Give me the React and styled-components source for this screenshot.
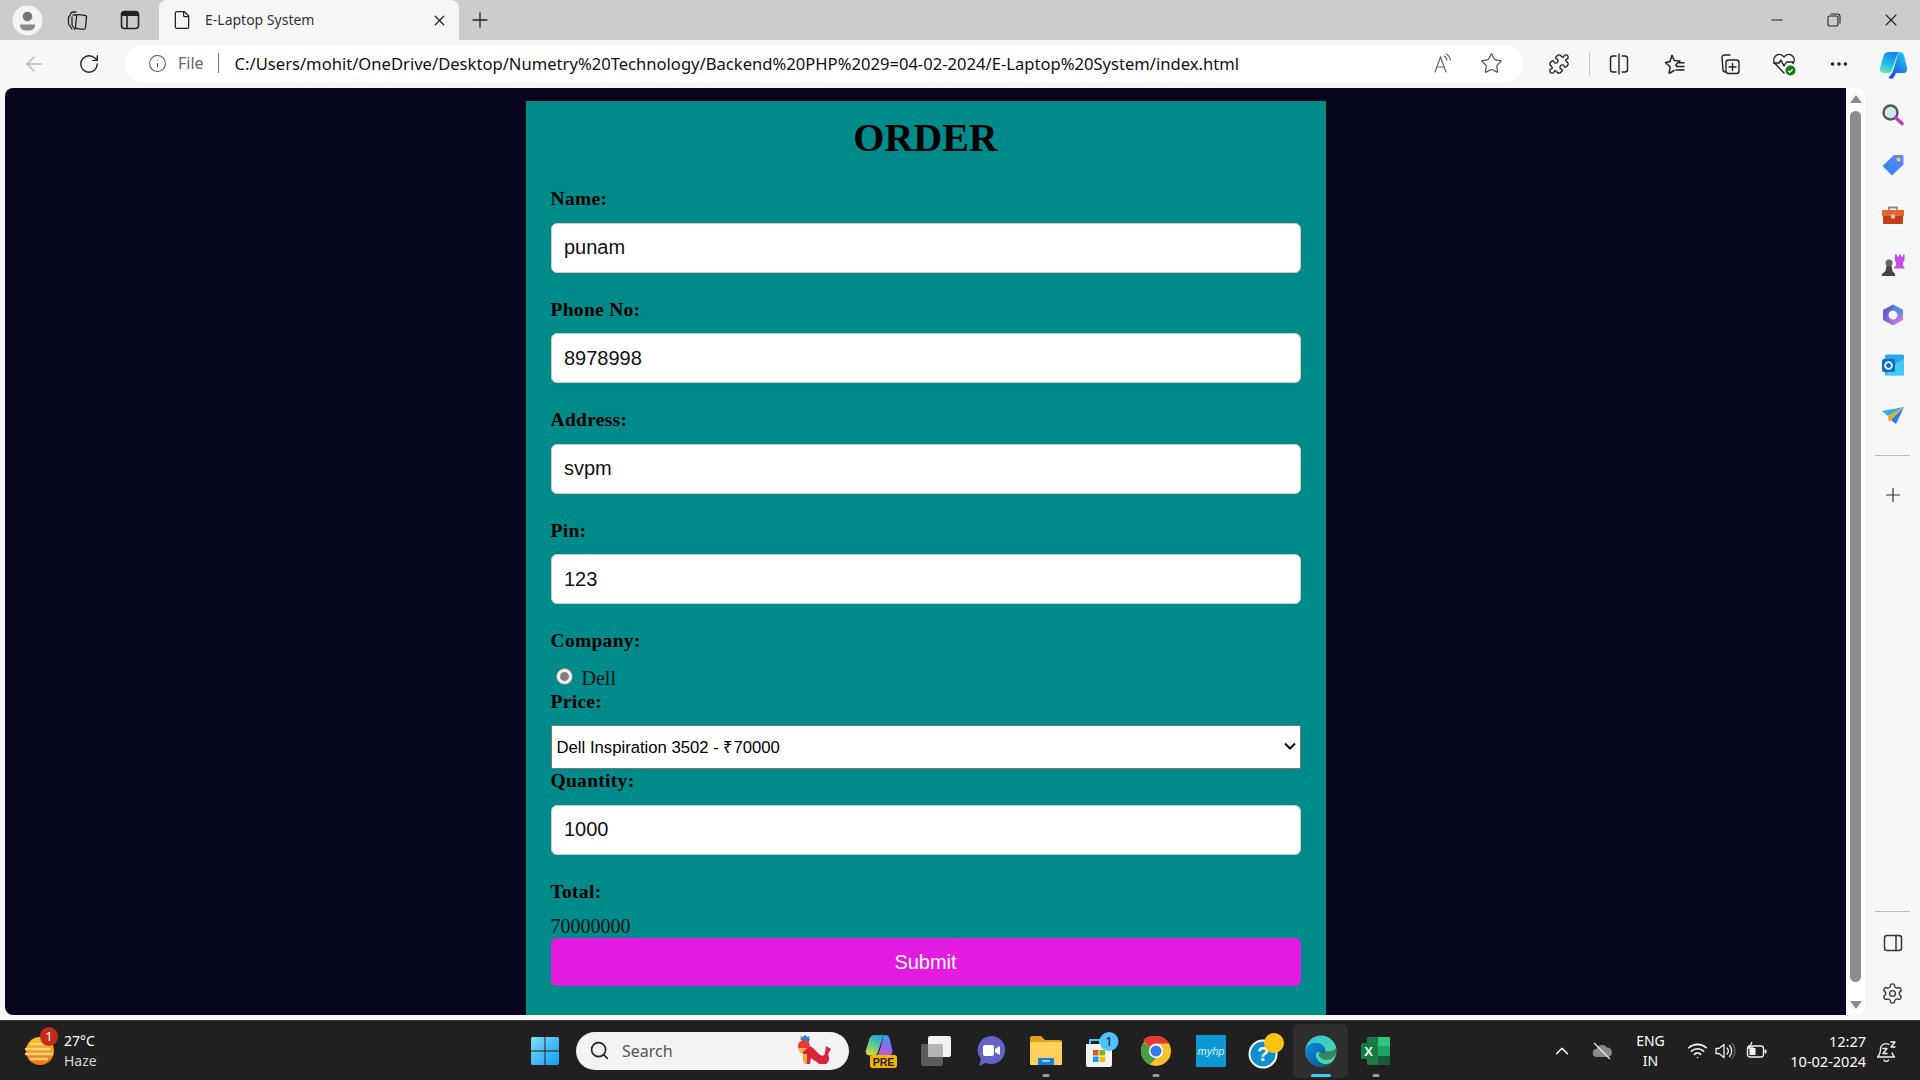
import React from 'react';
import styled, { createGlobalStyle } from 'styled-components';
import { ArrowLeft, RotateCw, Info, Star, Plus, X, Minus, File, Search, ChevronUp, Wifi, Settings, MoreHorizontal, Puzzle } from 'lucide-react';

const GlobalStyle = createGlobalStyle`
  * { box-sizing: border-box; }
  html, body { margin: 0; padding: 0; height: 100%; overflow: hidden; background: #f7f7f7; }
`;

const chromeFont = `"Noto Sans", "Open Sans", sans-serif`;
const pageFont = `"Liberation Serif", "Times New Roman", serif`;
const fieldFont = `"Liberation Sans", Arial, sans-serif`;

const URL_TEXT = 'C:/Users/mohit/OneDrive/Desktop/Numetry%20Technology/Backend%20PHP%2029=04-02-2024/E-Laptop%20System/index.html';

/* ---------- browser chrome ---------- */
const Screen = styled.div`
  width: 1920px;
  height: 1080px;
  display: flex;
  flex-direction: column;
  overflow: hidden;
`;

const TabStrip = styled.div`
  height: 40px;
  background: #cccccc;
  display: flex;
  align-items: stretch;
  flex: none;
`;

const Slot = styled.div`
  width: ${p => p.$w}px;
  flex: none;
  display: flex;
  align-items: center;
  justify-content: center;
  color: ${p => p.$color || '#222'};
  margin-left: ${p => p.$ml || 0}px;
`;

const Tab = styled.div`
  width: 300px;
  background: #f7f7f7;
  border-radius: 8px 8px 0 0;
  display: flex;
  align-items: center;
  padding-left: 13px;
  padding-right: 11px;
  color: #222;
`;

const TabTitle = styled.span`
  font: 400 14px ${chromeFont};
  color: #333;
  margin-left: 13px;
  margin-top: -2px;
  flex: 1;
`;

const WindowControls = styled.div`
  margin-left: auto;
  display: flex;
`;

const Toolbar = styled.div`
  height: 48px;
  background: #f7f7f7;
  display: flex;
  align-items: center;
  flex: none;
  overflow: hidden;
`;

const AddressBar = styled.div`
  width: 1398px;
  height: 37px;
  margin-left: 15px;
  margin-top: -2px;
  background: #fff;
  border-radius: 19px;
  display: flex;
  align-items: center;
  padding: 0 7px 0 23px;
  flex: none;
`;

const FileLabel = styled.span`
  font: 400 16px ${chromeFont};
  color: #666;
  margin-left: 11px;
`;

const BarDivider = styled.span`
  width: 1px;
  height: 20px;
  background: #777;
  margin: 0 16px 0 14px;
`;

const UrlText = styled.span`
  font: 400 16.6px ${chromeFont};
  color: #111;
  white-space: nowrap;
`;

const AddressActions = styled.div`
  margin-left: auto;
  display: flex;
`;

const ToolDivider = styled.span`
  width: 1px;
  height: 24px;
  background: #c8c8c8;
  margin: 0 1px 0 3px;
  flex: none;
`;

const Main = styled.div`
  flex: 1;
  display: flex;
  background: #f7f7f7;
  min-height: 0;
`;

const Viewport = styled.div`
  margin-left: 5px;
  width: 1860px;
  height: 927px;
  display: flex;
  border-radius: 8px;
  overflow: hidden;
  flex: none;
`;

const Page = styled.div`
  width: 1841px;
  background: #070820;
  display: flex;
  justify-content: center;
  align-items: flex-start;
  overflow: hidden;
`;

const Scrollbar = styled.div`
  width: 19px;
  background: #fff;
  display: flex;
  flex-direction: column;
  align-items: center;
  padding: 7px 0 6px;
`;

const ScrollArrow = styled.div`
  width: 0;
  height: 0;
  border-left: 6px solid transparent;
  border-right: 6px solid transparent;
  ${p => (p.$down ? 'border-top: 8px solid #8c8c8c;' : 'border-bottom: 8px solid #8c8c8c;')}
`;

const ScrollThumb = styled.div`
  width: 11px;
  flex: 1;
  margin: 8px 0 19px;
  background: #8c8c8c;
  border-radius: 6px;
`;

const Sidebar = styled.div`
  width: 55px;
  flex: none;
  height: 927px;
  display: flex;
  flex-direction: column;
  align-items: center;
  padding-top: 14px;
`;

const SideItem = styled.div`
  width: 26px;
  height: 26px;
  margin-bottom: ${p => (p.$last ? 9 : 24)}px;
  display: flex;
  align-items: center;
  justify-content: center;
  color: #333;
`;

const SideRule = styled.div`
  width: 35px;
  height: 1px;
  background: #bdbdbd;
  margin: ${p => p.$m};
`;

const Spacer = styled.div`
  flex: 1;
`;

/* ---------- order form ---------- */
const Panel = styled.form`
  width: 800px;
  margin-top: 13px;
  padding: 13px 25px 28px;
  background: #008b8b;
  box-shadow: 0 0 5px #000;
  min-height: 914px;
`;

const Title = styled.h1`
  margin: 0 0 25px;
  font: 700 40px/48px ${pageFont};
  color: #000;
  text-align: center;
`;

const Label = styled.label`
  display: block;
  margin-bottom: 12.5px;
  font: 700 19.5px/23px ${pageFont};
  letter-spacing: 0.3px;
  color: #000;
`;

const TextInput = styled.input`
  display: block;
  width: 750px;
  height: 50px;
  margin-bottom: 25px;
  padding: 0 12.5px;
  border: 1px solid #ccc;
  border-radius: 6px;
  background: #fff;
  font: 400 20px ${fieldFont};
  color: #111;
  outline: none;
`;

const RadioRow = styled.div`
  height: 25px;
  padding-top: 2px;
  display: flex;
  align-items: center;
  font: 400 20px/23px ${pageFont};
  color: #111;
`;

const Radio = styled.input`
  appearance: none;
  width: 15px;
  height: 15px;
  margin: 0 10px 3px 6px;
  border-radius: 50%;
  background: #808080;
  border: 3px solid #f2f2f2;
  box-shadow: 0 0 0 1px #8a8a8a;
`;

const SelectWrap = styled.div`
  position: relative;
  width: 750px;
  height: 44px;
`;

const PriceSelect = styled.select`
  appearance: none;
  width: 100%;
  height: 100%;
  padding: 0 5px;
  border: 1px solid #767676;
  border-radius: 0;
  background: #fff;
  font: 400 16.7px ${fieldFont};
  color: #000;
  outline: none;
`;

const SelectChevron = styled.svg`
  position: absolute;
  right: 5px;
  top: 17px;
  pointer-events: none;
`;

const TotalValue = styled.div`
  font: 400 20px/23px ${pageFont};
  color: #111;
`;

const SubmitButton = styled.button`
  display: block;
  width: 750px;
  height: 48px;
  border: none;
  border-radius: 6px;
  background: #e31adf;
  color: #fff;
  font: 400 20px ${fieldFont};
`;

/* ---------- taskbar ---------- */
const Taskbar = styled.div`
  height: 60px;
  flex: none;
  background: #202020;
  border-top: 1px solid #3a3a3a;
  display: flex;
  align-items: center;
  color: #fff;
  font-family: ${chromeFont};
`;

const Weather = styled.div`
  width: 530px;
  padding-left: 24px;
  display: flex;
  align-items: center;
  flex: none;
`;

const WeatherIcon = styled.div`
  position: relative;
  width: 32px;
  height: 34px;
  flex: none;
`;

const RedBadge = styled.span`
  position: absolute;
  top: -7px;
  right: -2px;
  width: 18px;
  height: 19px;
  border-radius: 50%;
  background: #c42b1c;
  font: 400 13px/19px ${chromeFont};
  text-align: center;
  color: #fff;
`;

const WeatherText = styled.div`
  margin-left: 8px;
  font-size: 14px;
  line-height: 20px;
  & > div:last-child { color: #d5d5d5; }
`;

const SearchPill = styled.div`
  width: 273px;
  height: 38px;
  margin-left: 16px;
  background: #f3f3f3;
  border-radius: 19px;
  display: flex;
  align-items: center;
  padding: 0 12px 0 13px;
  color: #222;
  flex: none;
`;

const SearchText = styled.span`
  margin-left: 12px;
  flex: 1;
  font-size: 16px;
  color: #555;
`;

const TaskSlot = styled.div`
  position: relative;
  width: 55px;
  height: 54px;
  flex: none;
  display: flex;
  align-items: center;
  justify-content: center;
  border-radius: 5px;
  background: ${p => (p.$active ? '#2e2e2e' : 'transparent')};
  &::after {
    content: '';
    display: ${p => (p.$running || p.$active ? 'block' : 'none')};
    position: absolute;
    bottom: 1px;
    left: 50%;
    transform: translateX(-50%);
    width: ${p => (p.$active ? 20 : 7)}px;
    height: 3px;
    border-radius: 2px;
    background: ${p => (p.$active ? '#4cc2ff' : '#9a9a9a')};
  }
`;

const TaskIcons = styled.div`
  display: flex;
  margin-left: 4px;
`;

const Tray = styled.div`
  margin-left: auto;
  padding-right: 12px;
  display: flex;
  align-items: center;
  height: 100%;
`;

const TraySlot = styled.div`
  width: ${p => p.$w}px;
  margin-left: ${p => p.$ml || 0}px;
  flex: none;
  display: flex;
  align-items: center;
  justify-content: center;
`;

const LangText = styled.div`
  width: 48px;
  text-align: center;
  font-size: 14px;
  line-height: 20px;
`;

const Clock = styled.div`
  width: 91px;
  text-align: right;
  font-size: 14.5px;
  line-height: 20px;
`;

const stroke = { fill: 'none', stroke: 'currentColor', strokeWidth: 1.5, strokeLinecap: 'round', strokeLinejoin: 'round' };

/* ---------- icons: toolbar ---------- */
const ProfileIcon = () => (
  <svg width="31" height="31" viewBox="0 0 31 31">
    <circle cx="15.5" cy="15.5" r="15" fill="#f4f4f4" />
    <circle cx="15.5" cy="11.5" r="4.8" fill="#777" />
    <path d="M8 19.5h15v2a6 6 0 0 1-6 4h-3a6 6 0 0 1-6-4z" fill="#8c8c8c" />
  </svg>
);
const WorkspacesIcon = () => (
  <svg width="24" height="24" viewBox="0 0 24 24" {...stroke} strokeWidth="1.3">
    <path d="M8 4h3M5.5 6.5A2.5 2.5 0 0 1 8 4" />
    <path d="M5 7.5 3.5 9v7l3.5 5" />
    <path d="M8 7h3.5M7 9v8l3 4.500" />
    <rect x="11" y="7" width="10" height="14" rx="2" transform="rotate(6 16 14)" />
  </svg>
);
const VerticalTabsIcon = () => (
  <svg width="22" height="22" viewBox="0 0 22 22">
    <rect x="2.500" y="2.500" width="17" height="17" rx="3" fill="none" stroke="#222" strokeWidth="1.6" />
    <path d="M3 7V5a2 2 0 0 1 2-2h12a2 2 0 0 1 2 2v2z" fill="#222" />
    <path d="M8 7v12" stroke="#222" strokeWidth="1.6" />
  </svg>
);
const RestoreIcon = () => (
  <svg width="16" height="16" viewBox="0 0 16 16" {...stroke} strokeWidth="1.1">
    <rect x="2" y="4" width="10" height="10" rx="1.500" />
    <path d="M5 2h6.500A2.500 2.500 0 0 1 14 4.500V11" />
  </svg>
);
const ReadAloudIcon = () => (
  <svg width="22" height="22" viewBox="0 0 22 22" fill="none" stroke="#666" strokeWidth="1.200" strokeLinecap="round">
    <path d="M3 20 8.500 5 14 20M5 15h7" />
    <path d="M12 4a6 6 0 0 1 3 4M14.500 2a9 9 0 0 1 4 6" />
  </svg>
);
const SplitIcon = () => (
  <svg width="22" height="24" viewBox="0 0 22 24" {...stroke} strokeWidth="1.400">
    <path d="M8 4H5a2.500 2.500 0 0 0-2.500 2.500v11A2.500 2.500 0 0 0 5 20h3M14 4h3a2.500 2.500 0 0 1 2.500 2.500v11A2.500 2.500 0 0 1 17 20h-3" />
    <path d="M11 2v20" />
  </svg>
);
const FavoritesIcon = () => (
  <svg width="24" height="24" viewBox="0 0 24 24" {...stroke} strokeWidth="1.500">
    <path d="M10 3.500 12.300 8.500 18 9l-4.300 3.800 1.300 1.200M7 21l1.200-6L3.500 10.500 8 9.500" />
    <path d="M10 3.500 8 9.500M8 21l4-2.500M14.500 14.500H22M14 18h8M17 10.800h5" />
  </svg>
);
const CollectionsIcon = () => (
  <svg width="24" height="24" viewBox="0 0 24 24" {...stroke} strokeWidth="1.400">
    <path d="M13 3H7.500A2.500 2.500 0 0 0 5 5.500l1 12a2.500 2.500 0 0 0 2.500 2.500" />
    <rect x="9" y="8" width="13" height="13.500" rx="2.500" />
    <path d="M15.500 11.500v7M12 15h7" />
  </svg>
);
const HealthIcon = () => (
  <svg width="26" height="26" viewBox="0 0 26 26">
    <path d="M13 22 4 12.500A5.500 5.500 0 0 1 12 5l1 1 1-1a5.500 5.500 0 0 1 8 7.500M2.500 12h5.500l2-3 3 6 2.500-4h6" fill="none" stroke="#222" strokeWidth="1.400" strokeLinejoin="round" strokeLinecap="round" />
    <circle cx="19.500" cy="19.500" r="5" fill="#107c10" />
    <path d="m17.300 19.600 1.600 1.600 2.800-3" fill="none" stroke="#fff" strokeWidth="1.300" />
  </svg>
);
const CopilotLeft = 'M11 3c-3 0-4.500 1.500-5.500 4L2 19c-.8 3 1 5 4 5h4c2 0 3.500-1 4-3l5-15c.5-2 1.500-3 3-3z';
const CopilotRight = 'M22 3c2 0 3.500 1 4 3l3 13c.5 3-1 5-4 5h-7l-2 4c-1 2-3 2-5 1-1-.5 0-1 1-2 2-2 3-5 4-8l3-11c.4-3 1-5 3-5z';
const CopilotIcon = () => (
  <svg width="30" height="30" viewBox="0 0 30 30">
    <defs>
      <linearGradient id="cop1" x1="0.6" y1="0" x2="0.2" y2="1">
        <stop offset="0" stopColor="#1b7ff0" />
        <stop offset="0.55" stopColor="#1ac0e8" />
        <stop offset="1" stopColor="#6fe8b0" />
      </linearGradient>
      <linearGradient id="cop2" x1="0.8" y1="0" x2="0.2" y2="1">
        <stop offset="0" stopColor="#28c8f0" />
        <stop offset="1" stopColor="#1348e0" />
      </linearGradient>
    </defs>
    <path d={CopilotLeft} fill="url(#cop1)" />
    <path d={CopilotRight} fill="url(#cop2)" />
  </svg>
);

/* ---------- icons: sidebar ---------- */
const SideSearch = () => (
  <svg width="24" height="24" viewBox="0 0 24 24">
    <circle cx="9.500" cy="9.500" r="7" fill="#cfe8f5" stroke="#555" strokeWidth="2.400" />
    <path d="m15 15 6 5.500" stroke="#c239d8" strokeWidth="3.600" strokeLinecap="round" />
  </svg>
);
const SideTag = () => (
  <svg width="24" height="24" viewBox="0 0 24 24">
    <defs><linearGradient id="tag" x1="1" y1="0" x2="0" y2="1"><stop offset="0" stopColor="#6b7dff" /><stop offset="1" stopColor="#1f8df0" /></linearGradient></defs>
    <path d="M13 2h8a1.500 1.500 0 0 1 1.500 1.500v8L11 22.500 1.500 13z" fill="url(#tag)" />
    <circle cx="17.500" cy="6.500" r="2" fill="#f4d33c" />
  </svg>
);
const SideToolbox = () => (
  <svg width="24" height="24" viewBox="0 0 24 24">
    <path d="M8 7V4.500h8V7" fill="none" stroke="#8a8a8a" strokeWidth="1.800" />
    <path d="M1 7h22v6H1z" fill="#e8622c" />
    <path d="M2 13h20v7a1 1 0 0 1-1 1H3a1 1 0 0 1-1-1z" fill="#c23d14" />
    <rect x="10" y="11.500" width="4" height="4" fill="#c9c9c9" />
  </svg>
);
const SideChess = () => (
  <svg width="24" height="24" viewBox="0 0 24 24">
    <path d="M14 1.500h2v2h2v-2h2v2h2v-2h1.500v6l-1.500 2v3l1.500 2v1H13v-1l2-2v-3l-1-2z" fill="#c44ff0" />
    <circle cx="8" cy="10" r="3.500" fill="#666" />
    <path d="M5.500 13h5l1 5 2.500 3v2H1v-2l3.500-3z" fill="#444" />
  </svg>
);
const SideM365 = () => (
  <svg width="24" height="24" viewBox="0 0 24 24">
    <defs>
      <linearGradient id="m1" x1="0" y1="0" x2="1" y2="1"><stop offset="0" stopColor="#2a62d8" /><stop offset="0.5" stopColor="#9a5fd8" /><stop offset="1" stopColor="#c79ae8" /></linearGradient>
    </defs>
    <path d="M12 1.500 22 7v10l-10 5.500L2 17V7z" fill="url(#m1)" />
    <circle cx="12" cy="12" r="4.500" fill="#f7f7f7" />
    <path d="M12 1.500 22 7v5l-6-2-4-3z" fill="#37a0e8" opacity=".7" />
  </svg>
);
const SideOutlook = () => (
  <svg width="24" height="24" viewBox="0 0 24 24">
    <rect x="4" y="1.500" width="19" height="21" rx="1.500" fill="#28a8ea" />
    <path d="M12 12 23 6v14a2 2 0 0 1-2 2H5z" fill="#50d9ff" opacity=".7" />
    <rect x="1" y="6" width="13" height="13" rx="2" fill="#0a6cc4" />
    <circle cx="7.500" cy="12.500" r="3.400" fill="none" stroke="#fff" strokeWidth="1.800" />
  </svg>
);
const SidePlane = () => (
  <svg width="24" height="24" viewBox="0 0 24 24">
    <path d="M1 8 23 4 7 13z" fill="#2ab0f0" />
    <path d="M23 4 7 13l1 6z" fill="#f0a81e" />
    <path d="M23 4 15 21l-5-4z" fill="#1e80e8" />
  </svg>
);
const SidePaneIcon = () => (
  <svg width="20" height="18" viewBox="0 0 20 18" {...stroke} strokeWidth="1.500">
    <rect x="1.500" y="1.500" width="17" height="15" rx="2.500" />
    <path d="M13 1.500v15" />
  </svg>
);

/* ---------- icons: taskbar ---------- */
const WeatherGlyph = () => (
  <svg width="32" height="34" viewBox="0 0 32 34">
    <defs><linearGradient id="sun" x1="0" y1="0" x2="0" y2="1"><stop offset="0" stopColor="#fcc419" /><stop offset="1" stopColor="#f2700f" /></linearGradient></defs>
    <circle cx="16" cy="17" r="14" fill="url(#sun)" />
    <path d="M7 10h18M2 15h24M2 20h26M7 25h16" stroke="#f3d28a" strokeWidth="2.400" strokeLinecap="round" />
  </svg>
);
const WindowsLogo = () => (
  <svg width="30" height="30" viewBox="0 0 30 30">
    <defs><linearGradient id="win" x1="0" y1="0" x2="1" y2="1"><stop offset="0" stopColor="#7fdcf8" /><stop offset="1" stopColor="#149bf0" /></linearGradient></defs>
    <path d="M1 2.500A1.500 1.500 0 0 1 2.500 1h12v13.500H1zM15.500 1h12A1.500 1.500 0 0 1 29 2.500v12H15.500zM1 15.500h13.500V29h-12A1.500 1.500 0 0 1 1 27.500zM15.500 15.500H29v12a1.500 1.500 0 0 1-1.500 1.500h-12z" fill="url(#win)" />
  </svg>
);
const DragonIcon = () => (
  <svg width="44" height="34" viewBox="0 0 44 34">
    <path d="M8 2l2 5M16 2l-2 5" stroke="#d8a030" strokeWidth="2" />
    <path d="M7 5 12 1l5 4-2 5z" fill="#2f7fd8" />
    <circle cx="11" cy="12" r="6" fill="#e83a3a" />
    <path d="M5 14h11v5H7z" fill="#f0b040" />
    <path d="M10 18c0 6 0 10 3 12h4l1-6c3 3 6 3 8 6h7c3-2 4-5 2-10l3-5-5-3-1 7c-1 4-4 3-6 1l-6-6c-3-3-6 0-10 4z" fill="#e0213d" />
    <path d="M10 20h4v10h-3z" fill="#f0b040" />
  </svg>
);
const PreviewCopilot = () => (
  <svg width="34" height="36" viewBox="0 0 34 36">
    <defs>
      <linearGradient id="pc1" x1="0.7" y1="0" x2="0.2" y2="1">
        <stop offset="0" stopColor="#1f9ff0" /><stop offset="0.6" stopColor="#6fd07a" /><stop offset="1" stopColor="#e8d040" />
      </linearGradient>
      <linearGradient id="pc2" x1="0.7" y1="0" x2="0.3" y2="1">
        <stop offset="0" stopColor="#28a8f0" /><stop offset="0.5" stopColor="#a060e8" /><stop offset="1" stopColor="#f060b8" />
      </linearGradient>
    </defs>
    <g transform="translate(0 -1) scale(.98)">
      <path d={CopilotLeft} fill="url(#pc1)" />
      <path d={CopilotRight} fill="url(#pc2)" />
    </g>
    <rect x="6" y="22" width="27" height="13" rx="2.500" fill="#f4b400" />
    <text x="19.500" y="32.500" textAnchor="middle" fontFamily="Liberation Sans" fontWeight="700" fontSize="10.500" fill="#222">PRE</text>
  </svg>
);
const TaskViewIcon = () => (
  <svg width="32" height="32" viewBox="0 0 32 32">
    <rect x="1" y="9" width="22" height="22" rx="2" fill="#5c5c5c" />
    <rect x="8" y="1" width="23" height="21" rx="2" fill="#f2f2f2" />
    <rect x="8" y="9" width="15" height="13" fill="#b5b5b5" />
  </svg>
);
const TeamsIcon = () => (
  <svg width="30" height="32" viewBox="0 0 30 32">
    <path d="M15 1a14 14 0 1 1-5 27l-7 3 2-7A14 14 0 0 1 15 1z" fill="#6264c8" />
    <rect x="7" y="10" width="11" height="11" rx="2" fill="#fff" />
    <path d="m19 14 5-3v9l-5-3z" fill="#fff" />
  </svg>
);
const ExplorerIcon = () => (
  <svg width="32" height="30" viewBox="0 0 32 30">
    <path d="M0 2a2 2 0 0 1 2-2h9l4 4h15a2 2 0 0 1 2 2v4H0z" fill="#e0a21a" />
    <path d="M0 6h32v22a1 1 0 0 1-1 1H1a1 1 0 0 1-1-1z" fill="#fcd15c" />
    <path d="M9 22h14a1 1 0 0 1 1 1v6H8v-6a1 1 0 0 1 1-1z" fill="#1a7fd8" />
    <path d="M12 25h8" stroke="#bfe6ff" strokeWidth="1.500" />
  </svg>
);
const StoreIcon = () => (
  <svg width="38" height="38" viewBox="0 0 38 38">
    <path d="M8 12V8h10v4" fill="none" stroke="#4cc2ff" strokeWidth="2" />
    <path d="M4 12h26v21a2 2 0 0 1-2 2H6a2 2 0 0 1-2-2z" fill="#f2f2f2" />
    <rect x="11" y="18" width="5.500" height="5.500" fill="#f25022" />
    <rect x="17.500" y="18" width="5.500" height="5.500" fill="#7fba00" />
    <rect x="11" y="24.500" width="5.500" height="5.500" fill="#00a4ef" />
    <rect x="17.500" y="24.500" width="5.500" height="5.500" fill="#ffb900" />
    <circle cx="27" cy="9.500" r="9.500" fill="#4cc2ff" />
    <text x="27" y="14" textAnchor="middle" fontFamily="Noto Sans" fontSize="13" fill="#111">1</text>
  </svg>
);
const ChromeIcon = () => (
  <svg width="30" height="30" viewBox="0 0 30 30">
    <circle cx="15" cy="15" r="15" fill="#fbc02d" />
    <path d="M15 0a15 15 0 0 1 13 7.500H15a7.500 7.500 0 0 0-6.500 3.750L2 3.900A15 15 0 0 1 15 0z" fill="#e53935" />
    <path d="M2.900 6.200 8.500 11.250 15 22.500 8.500 28.500A15 15 0 0 1 2.900 6.200z" fill="#43a047" />
    <circle cx="15" cy="15" r="7.200" fill="#fff" />
    <circle cx="15" cy="15" r="5.600" fill="#3a7de8" />
  </svg>
);
const MyHpIcon = () => (
  <svg width="30" height="32" viewBox="0 0 30 32">
    <rect width="30" height="32" rx="1" fill="#0c9ad6" />
    <text x="15" y="20" textAnchor="middle" fontFamily="Liberation Sans" fontStyle="italic" fontSize="11" fill="#d8f0fb">myhp</text>
  </svg>
);
const HelpIcon = () => (
  <svg width="36" height="36" viewBox="0 0 36 36">
    <circle cx="15" cy="21" r="13.500" fill="#0a8fd0" stroke="#fff" strokeWidth="2" />
    <text x="15" y="28" textAnchor="middle" fontFamily="Liberation Sans" fontWeight="700" fontSize="20" fill="#fff">?</text>
    <circle cx="26" cy="10" r="10" fill="#ffc20e" />
  </svg>
);
const EdgeIcon = () => (
  <svg width="32" height="32" viewBox="0 0 32 32">
    <defs>
      <linearGradient id="eg1" x1="0" y1="0" x2="1" y2="1"><stop offset="0" stopColor="#35c1f1" /><stop offset="1" stopColor="#4fe07a" /></linearGradient>
      <linearGradient id="eg2" x1="0" y1="0" x2="1" y2="1"><stop offset="0" stopColor="#0f8ad8" /><stop offset="1" stopColor="#0c4f94" /></linearGradient>
    </defs>
    <circle cx="16" cy="16" r="15.500" fill="url(#eg1)" />
    <path d="M1 15C2 9 8 7 13 8c5 1 8 5 7 8-1 2-3 2-5 1-3-1-6 3-3 7 3 5 10 7 15 3-3 4-8 5-11 5C7 32 0 24 1 15z" fill="url(#eg2)" />
    <path d="M20 16c3 1 9 0 11-3l.5 3c0 5-5 9-10 9-6 0-10-6-6-8 2 0 3 0 4.500-1z" fill="#202020" opacity=".45" />
  </svg>
);
const ExcelIcon = () => (
  <svg width="30" height="30" viewBox="0 0 30 30">
    <rect x="6" y="1" width="23" height="28" rx="1.500" fill="#1d7a45" />
    <rect x="17" y="1" width="12" height="9" fill="#33c481" />
    <rect x="17" y="10" width="12" height="10" fill="#21a366" />
    <rect x="17" y="20" width="12" height="9" fill="#185c37" />
    <rect x="0" y="7" width="15" height="16" rx="1.500" fill="#107c41" />
    <text x="7.500" y="20" textAnchor="middle" fontFamily="Liberation Sans" fontWeight="700" fontSize="13" fill="#fff">X</text>
  </svg>
);
const CloudOffIcon = () => (
  <svg width="22" height="20" viewBox="0 0 22 20">
    <path d="M6 16a4 4 0 0 1-.5-8A6 6 0 0 1 16 6.500a4.800 4.800 0 0 1 1 9.500z" fill="#8a8a8a" />
    <path d="m3 2 16 16" stroke="#e8e8e8" strokeWidth="1.300" />
  </svg>
);
const VolumeIcon = () => (
  <svg width="22" height="20" viewBox="0 0 22 20" fill="none" stroke="#f2f2f2" strokeWidth="1.300" strokeLinejoin="round" strokeLinecap="round">
    <path d="M2 7.500v5h3l5 4V3.500l-5 4z" />
    <path d="M13 7a4 4 0 0 1 0 6M15.500 4.500a8 8 0 0 1 0 11" />
    <path d="M18 2.500a11 11 0 0 1 0 15" stroke="#666" />
  </svg>
);
const BatteryIcon = () => (
  <svg width="22" height="20" viewBox="0 0 22 20">
    <rect x="1.500" y="5" width="16" height="11" rx="2.500" fill="none" stroke="#f2f2f2" strokeWidth="1.300" />
    <rect x="3.500" y="7" width="6" height="7" fill="#f2f2f2" />
    <rect x="18.500" y="8.500" width="2" height="4" rx="1" fill="#f2f2f2" />
    <path d="M6 1 3 7h3.500L5 11" fill="none" stroke="#f2f2f2" strokeWidth="1.300" />
  </svg>
);
const QuietBellIcon = () => (
  <svg width="22" height="22" viewBox="0 0 22 22" fill="none" stroke="#f2f2f2" strokeWidth="1.300" strokeLinejoin="round" strokeLinecap="round">
    <path d="M13 4.500A5.500 5.500 0 0 0 4.500 9c0 4-1 6-3 8h17c-1-1-1.800-2-2.300-4" />
    <path d="M8 20a2.500 2.500 0 0 0 4.500 0" />
    <path d="M7 8.500h4l-4 5h4M15 2h4l-4 5h4" />
  </svg>
);

const sideTop = [SideSearch, SideTag, SideToolbox, SideChess, SideM365, SideOutlook, SidePlane];
const taskApps = [
  { Icon: PreviewCopilot },
  { Icon: TaskViewIcon },
  { Icon: TeamsIcon },
  { Icon: ExplorerIcon, running: true },
  { Icon: StoreIcon },
  { Icon: ChromeIcon, running: true },
  { Icon: MyHpIcon },
  { Icon: HelpIcon },
  { Icon: EdgeIcon, active: true },
  { Icon: ExcelIcon, running: true },
];
const textFields = [
  { id: 'name', label: 'Name:', value: 'punam' },
  { id: 'phone', label: 'Phone No:', value: '8978998' },
  { id: 'address', label: 'Address:', value: 'svpm' },
  { id: 'pin', label: 'Pin:', value: '123' },
];

export default function App() {
  return (
    <Screen>
      <GlobalStyle />
      <TabStrip>
        <Slot $w={54}><ProfileIcon /></Slot>
        <Slot $w={46}><WorkspacesIcon /></Slot>
        <Slot $w={59}><VerticalTabsIcon /></Slot>
        <Tab>
          <File size={20} strokeWidth={1.5} />
          <TabTitle>E-Laptop System</TabTitle>
          <X size={17} strokeWidth={1.8} />
        </Tab>
        <Slot $w={42}><Plus size={24} strokeWidth={1.3} /></Slot>
        <WindowControls>
          <Slot $w={57}><Minus size={18} strokeWidth={1.4} /></Slot>
          <Slot $w={57}><RestoreIcon /></Slot>
          <Slot $w={58}><X size={20} strokeWidth={1.3} /></Slot>
        </WindowControls>
      </TabStrip>

      <Toolbar>
        <Slot $w={68} $color="#b5b5b5"><ArrowLeft size={24} strokeWidth={1.3} /></Slot>
        <Slot $w={42}><RotateCw size={22} strokeWidth={1.5} /></Slot>
        <AddressBar>
          <Info size={19} strokeWidth={1.3} color="#555" />
          <FileLabel>File</FileLabel>
          <BarDivider />
          <UrlText>{URL_TEXT}</UrlText>
          <AddressActions>
            <Slot $w={49}><ReadAloudIcon /></Slot>
            <Slot $w={49} $color="#555"><Star size={23} strokeWidth={1.3} /></Slot>
          </AddressActions>
        </AddressBar>
        <Slot $w={55} $ml={8}><Puzzle size={22} strokeWidth={1.5} /></Slot>
        <ToolDivider />
        <Slot $w={55}><SplitIcon /></Slot>
        <Slot $w={55}><FavoritesIcon /></Slot>
        <Slot $w={55}><CollectionsIcon /></Slot>
        <Slot $w={55}><HealthIcon /></Slot>
        <Slot $w={55}><MoreHorizontal size={22} strokeWidth={2} /></Slot>
        <Slot $w={53}><CopilotIcon /></Slot>
      </Toolbar>

      <Main>
        <Viewport>
          <Page>
            <Panel onSubmit={e => e.preventDefault()}>
              <Title>ORDER</Title>
              {textFields.map(f => (
                <React.Fragment key={f.id}>
                  <Label htmlFor={f.id}>{f.label}</Label>
                  <TextInput id={f.id} defaultValue={f.value} />
                </React.Fragment>
              ))}
              <Label>Company:</Label>
              <RadioRow>
                <Radio type="radio" name="company" defaultChecked />
                Dell
              </RadioRow>
              <Label htmlFor="price">Price:</Label>
              <SelectWrap>
                <PriceSelect id="price" defaultValue="70000">
                  <option value="70000">Dell Inspiration 3502 - ₹70000</option>
                </PriceSelect>
                <SelectChevron width="12" height="8" viewBox="0 0 12 8" fill="none" stroke="#111" strokeWidth="2">
                  <path d="m1 1.500 5 5 5-5" />
                </SelectChevron>
              </SelectWrap>
              <Label htmlFor="quantity">Quantity:</Label>
              <TextInput id="quantity" defaultValue="1000" />
              <Label>Total:</Label>
              <TotalValue>70000000</TotalValue>
              <SubmitButton type="submit">Submit</SubmitButton>
            </Panel>
          </Page>
          <Scrollbar>
            <ScrollArrow />
            <ScrollThumb />
            <ScrollArrow $down />
          </Scrollbar>
        </Viewport>
        <Sidebar>
          {sideTop.map((Icon, i) => (
            <SideItem key={i}><Icon /></SideItem>
          ))}
          <SideRule $m="3px 0 28px" />
          <Plus size={22} strokeWidth={1.3} color="#333" />
          <Spacer />
          <SideRule $m="0 0 18px" />
          <SideItem><SidePaneIcon /></SideItem>
          <SideItem $last><Settings size={23} strokeWidth={1.4} /></SideItem>
        </Sidebar>
      </Main>

      <Taskbar>
        <Weather>
          <WeatherIcon>
            <WeatherGlyph />
            <RedBadge>1</RedBadge>
          </WeatherIcon>
          <WeatherText>
            <div>27°C</div>
            <div>Haze</div>
          </WeatherText>
        </Weather>
        <WindowsLogo />
        <SearchPill>
          <Search size={21} strokeWidth={1.8} />
          <SearchText>Search</SearchText>
          <DragonIcon />
        </SearchPill>
        <TaskIcons>
          {taskApps.map(({ Icon, running, active }, i) => (
            <TaskSlot key={i} $running={running} $active={active}><Icon /></TaskSlot>
          ))}
        </TaskIcons>
        <Tray>
          <TraySlot $w={30}><ChevronUp size={22} strokeWidth={1.6} /></TraySlot>
          <TraySlot $w={50}><CloudOffIcon /></TraySlot>
          <LangText>ENG<br />IN</LangText>
          <TraySlot $w={28} $ml={8.5}><Wifi size={21} strokeWidth={1.8} /></TraySlot>
          <TraySlot $w={28}><VolumeIcon /></TraySlot>
          <TraySlot $w={36}><BatteryIcon /></TraySlot>
          <Clock>12:27<br />10-02-2024</Clock>
          <TraySlot $w={42}><QuietBellIcon /></TraySlot>
        </Tray>
      </Taskbar>
    </Screen>
  );
}
